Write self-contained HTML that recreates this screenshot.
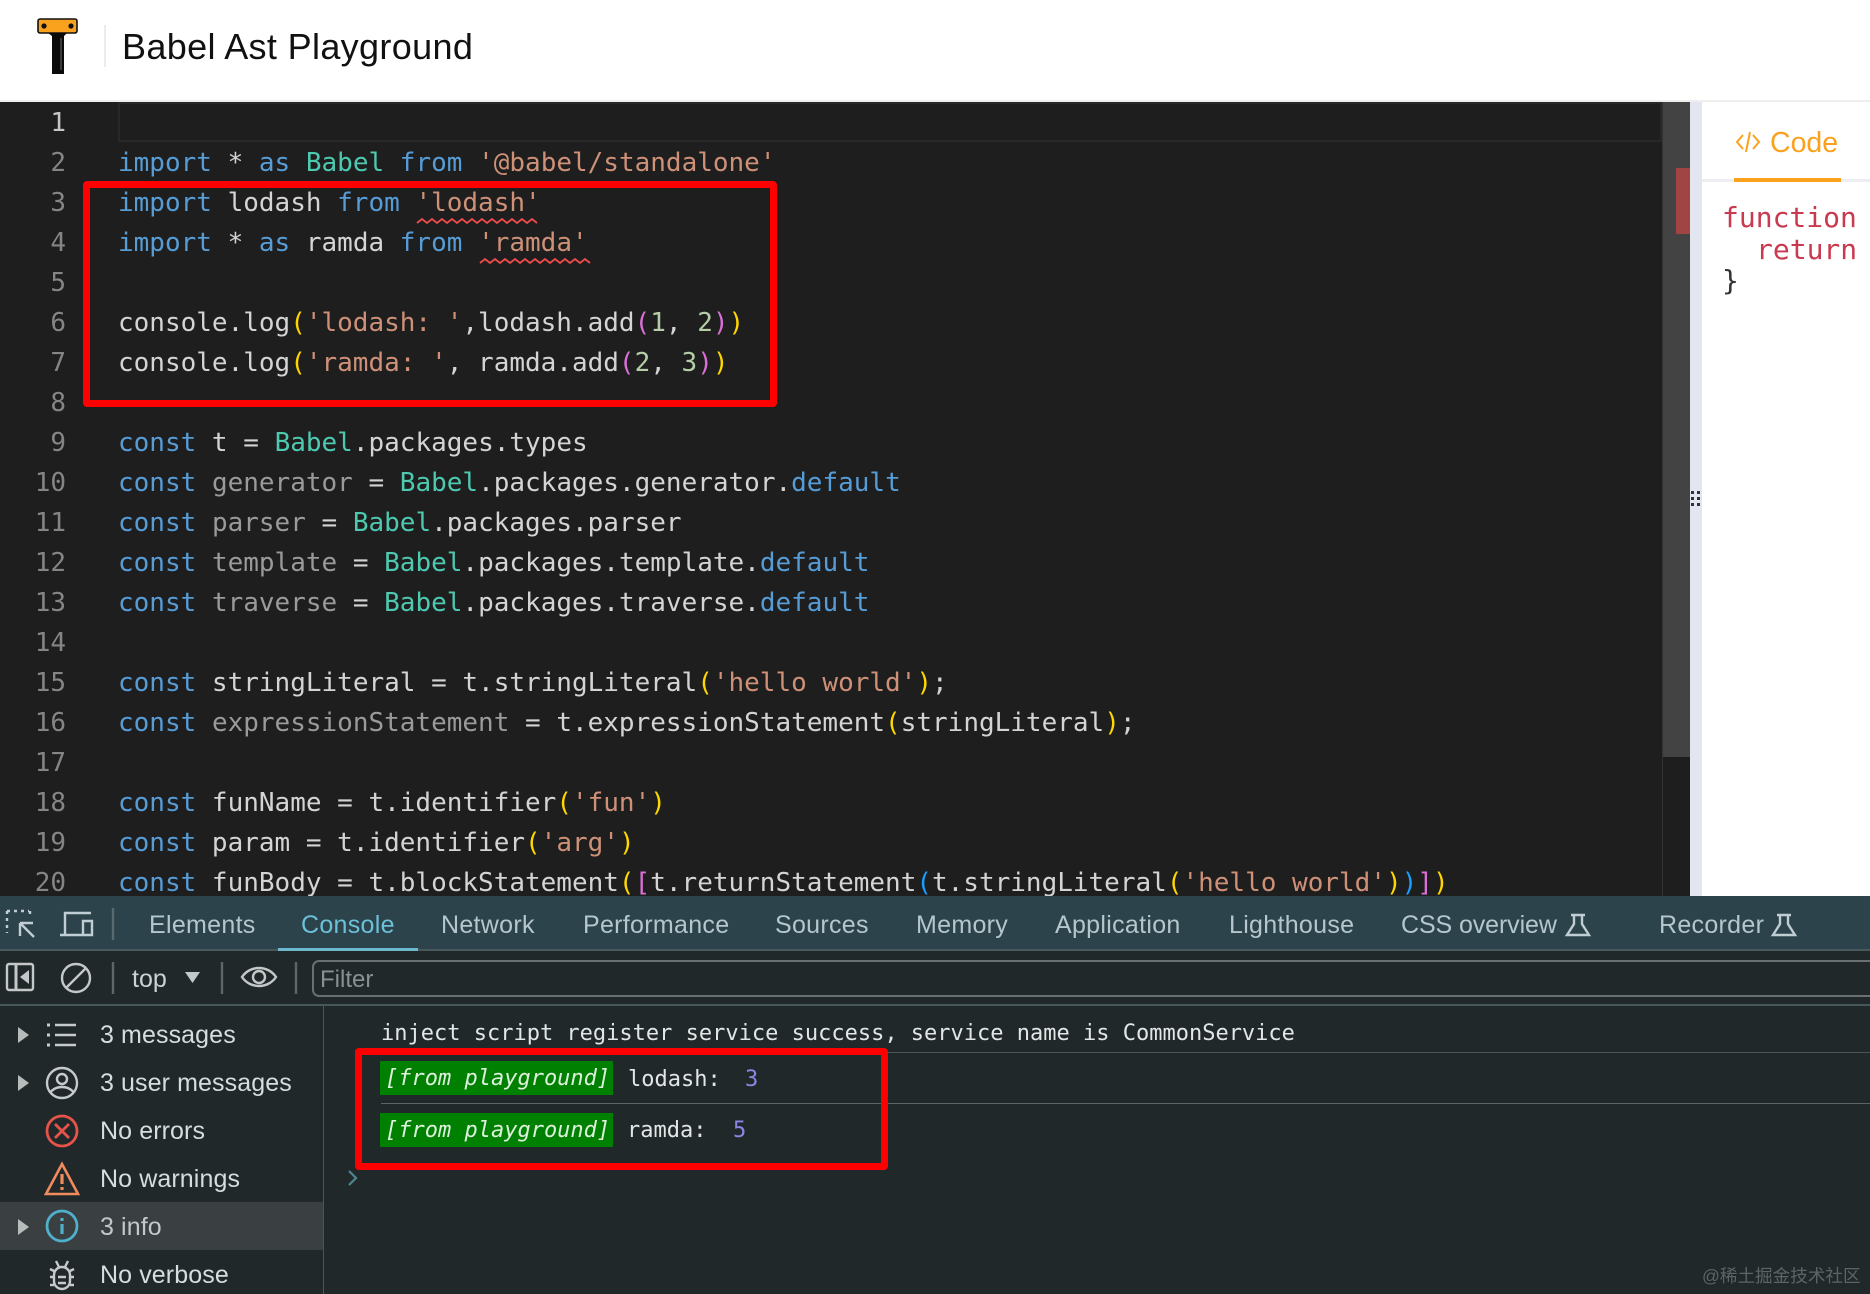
<!DOCTYPE html>
<html lang="en">
<head>
<meta charset="utf-8">
<title>Babel Ast Playground</title>
<style>
html,body{margin:0;padding:0;width:1870px;height:1294px;overflow:hidden;background:#fff}
*{box-sizing:border-box}
.abs,.l,.n,.tab,.side,.msg{position:absolute;white-space:pre}
#title{left:122px;top:25px;font:36px/44px "Liberation Sans",sans-serif;color:#111;letter-spacing:.35px}
#ed{position:absolute;left:0;top:102px;width:1662px;height:794px;background:#1e1e1e;overflow:hidden}
.l{left:118px;margin-top:1px;font:26px/40px "DejaVu Sans Mono",monospace;color:#d4d4d4}
.n{left:0;width:66px;margin-top:1px;text-align:right;font:26px/40px "DejaVu Sans Mono",monospace;color:#858585}
.k{color:#569cd6}.s{color:#ce9178}.t{color:#4ec9b0}.u{color:#9a9a9a}.d{color:#b5cea8}
.y{color:#ffd700}.p{color:#da70d6}.b{color:#179fff}
#dev{position:absolute;left:0;top:896px;width:1870px;height:398px;background:#212829;overflow:hidden}
#bar{position:absolute;left:0;top:0;width:1870px;height:55px;background:#2c434c;border-bottom:2px solid #48585c}
.tab{top:14px;font:25px/30px "Liberation Sans",sans-serif;color:#b5c6cc;letter-spacing:.3px}
.side{left:100px;font:25px/30px "Liberation Sans",sans-serif;color:#d6dddd;letter-spacing:.1px}
.msg{font:22px/30px "DejaVu Sans Mono",monospace;color:#e2e6e6}
.bd{left:380px;width:233px;height:34px;background:#008000;color:#dcf0dc;font:italic 22px/35px "DejaVu Sans Mono",monospace;padding-left:5px;position:absolute;white-space:pre}
.red{position:absolute;border:7px solid #ff0000;border-radius:4px}
</style>
</head>
<body>
<svg class="abs" style="left:36px;top:17px" width="44" height="58" viewBox="0 0 44 58">
<rect x="2" y="2" width="39" height="14" rx="2" fill="#faa11e" stroke="#111" stroke-width="1.6"/>
<circle cx="8" cy="9" r="2.6" fill="#111"/><circle cx="35" cy="9" r="2.6" fill="#111"/>
<path d="M12 16H31L28 19V57H16V19Z" fill="#0b0b0b"/>
<rect x="24" y="21" width="2" height="32" fill="#3a3a3a"/>
</svg>
<div class="abs" style="left:104px;top:25px;width:2px;height:42px;background:#ececec"></div>
<div id="title" class="abs">Babel Ast Playground</div>
<div class="abs" style="left:0;top:100px;width:1870px;height:2px;background:#eeeeee"></div>

<div id="ed">
<div class="abs" style="left:118px;top:0;width:1544px;height:40px;border:2px solid #282828"></div>
<div class="n" style="top:0;color:#c6c6c6">1</div>
<div class="n" style="top:40px">2</div><div class="n" style="top:80px">3</div><div class="n" style="top:120px">4</div><div class="n" style="top:160px">5</div><div class="n" style="top:200px">6</div><div class="n" style="top:240px">7</div><div class="n" style="top:280px">8</div><div class="n" style="top:320px">9</div><div class="n" style="top:360px">10</div><div class="n" style="top:400px">11</div><div class="n" style="top:440px">12</div><div class="n" style="top:480px">13</div><div class="n" style="top:520px">14</div><div class="n" style="top:560px">15</div><div class="n" style="top:600px">16</div><div class="n" style="top:640px">17</div><div class="n" style="top:680px">18</div><div class="n" style="top:720px">19</div><div class="n" style="top:760px">20</div>
<div class="l" style="top:40px"><span class="k">import</span> * <span class="k">as</span> <span class="t">Babel</span> <span class="k">from</span> <span class="s">'@babel/standalone'</span></div>
<div class="l" style="top:80px"><span class="k">import</span> lodash <span class="k">from</span> <span class="s">'lodash'</span></div>
<div class="l" style="top:120px"><span class="k">import</span> * <span class="k">as</span> ramda <span class="k">from</span> <span class="s">'ramda'</span></div>
<div class="l" style="top:200px">console.log<span class="y">(</span><span class="s">'lodash: '</span>,lodash.add<span class="p">(</span><span class="d">1</span>, <span class="d">2</span><span class="p">)</span><span class="y">)</span></div>
<div class="l" style="top:240px">console.log<span class="y">(</span><span class="s">'ramda: '</span>, ramda.add<span class="p">(</span><span class="d">2</span>, <span class="d">3</span><span class="p">)</span><span class="y">)</span></div>
<div class="l" style="top:320px"><span class="k">const</span> t = <span class="t">Babel</span>.packages.types</div>
<div class="l" style="top:360px"><span class="k">const</span> <span class="u">generator</span> = <span class="t">Babel</span>.packages.generator.<span class="k">default</span></div>
<div class="l" style="top:400px"><span class="k">const</span> <span class="u">parser</span> = <span class="t">Babel</span>.packages.parser</div>
<div class="l" style="top:440px"><span class="k">const</span> <span class="u">template</span> = <span class="t">Babel</span>.packages.template.<span class="k">default</span></div>
<div class="l" style="top:480px"><span class="k">const</span> <span class="u">traverse</span> = <span class="t">Babel</span>.packages.traverse.<span class="k">default</span></div>
<div class="l" style="top:560px"><span class="k">const</span> stringLiteral = t.stringLiteral<span class="y">(</span><span class="s">'hello world'</span><span class="y">)</span>;</div>
<div class="l" style="top:600px"><span class="k">const</span> <span class="u">expressionStatement</span> = t.expressionStatement<span class="y">(</span>stringLiteral<span class="y">)</span>;</div>
<div class="l" style="top:680px"><span class="k">const</span> funName = t.identifier<span class="y">(</span><span class="s">'fun'</span><span class="y">)</span></div>
<div class="l" style="top:720px"><span class="k">const</span> param = t.identifier<span class="y">(</span><span class="s">'arg'</span><span class="y">)</span></div>
<div class="l" style="top:760px"><span class="k">const</span> funBody = t.blockStatement<span class="y">(</span><span class="p">[</span>t.returnStatement<span class="b">(</span>t.stringLiteral<span class="y">(</span><span class="s">'hello world'</span><span class="y">)</span><span class="b">)</span><span class="p">]</span><span class="y">)</span></div>
</div>

<svg class="abs" style="left:0;top:0" width="1662" height="300" viewBox="0 0 1662 300">
<path d="M417 223l5-4 5 4 5-4 5 4 5-4 5 4 5-4 5 4 5-4 5 4 5-4 5 4 5-4 5 4 5-4 5 4 5-4 5 4 5-4 5 4 5-4 5 4 5-4 5 4" fill="none" stroke="#f14c4c" stroke-width="1.8"/>
<path d="M480 263l5-4 5 4 5-4 5 4 5-4 5 4 5-4 5 4 5-4 5 4 5-4 5 4 5-4 5 4 5-4 5 4 5-4 5 4 5-4 5 4 5-4 5 4" fill="none" stroke="#f14c4c" stroke-width="1.8"/>
</svg>

<div class="abs" style="left:1662px;top:102px;width:28px;height:655px;background:#434343"></div>
<div class="abs" style="left:1662px;top:757px;width:28px;height:139px;background:#1e1e1e"></div>
<div class="abs" style="left:1662px;top:102px;width:1px;height:794px;background:#333"></div>
<div class="abs" style="left:1676px;top:168px;width:14px;height:66px;background:#a04444"></div>
<div class="abs" style="left:1690px;top:102px;width:12px;height:794px;background:#e3e6ee"></div>
<svg class="abs" style="left:1690px;top:490px" width="12" height="18" viewBox="0 0 12 18" fill="#333">
<rect x="1" y="1" width="3" height="3"/><rect x="7" y="1" width="3" height="3"/><rect x="1" y="7" width="3" height="3"/><rect x="7" y="7" width="3" height="3"/><rect x="1" y="13" width="3" height="3"/><rect x="7" y="13" width="3" height="3"/>
</svg>
<svg class="abs" style="left:1735px;top:130px" width="26" height="24" viewBox="0 0 26 24" fill="none" stroke="#faa11e" stroke-width="2">
<path d="M8 5L2 12L8 19M18 5L24 12L18 19M15 2L11 22"/>
</svg>
<div class="abs" style="left:1770px;top:126px;font:28.5px/34px 'Liberation Sans',sans-serif;color:#faa11e">Code</div>
<div class="abs" style="left:1702px;top:179px;width:168px;height:3px;background:#eceef2"></div>
<div class="abs" style="left:1734px;top:178px;width:107px;height:4px;background:#faa11e"></div>
<div class="abs" style="left:1722px;top:202px;font:28px/32px 'DejaVu Sans Mono',monospace;color:#c93a50">function</div>
<div class="abs" style="left:1756px;top:234px;font:28px/32px 'DejaVu Sans Mono',monospace;color:#c93a50">return</div>
<div class="abs" style="left:1722px;top:265px;font:28px/32px 'DejaVu Sans Mono',monospace;color:#333">}</div>

<div id="dev">
<div id="bar"></div>
<div class="tab" style="left:149px">Elements</div>
<div class="tab" style="left:301px;color:#6cc0d8">Console</div>
<div class="tab" style="left:441px">Network</div>
<div class="tab" style="left:583px">Performance</div>
<div class="tab" style="left:775px">Sources</div>
<div class="tab" style="left:916px">Memory</div>
<div class="tab" style="left:1055px">Application</div>
<div class="tab" style="left:1229px">Lighthouse</div>
<div class="tab" style="left:1401px;letter-spacing:-.1px">CSS overview</div>
<div class="tab" style="left:1659px">Recorder</div>
<div class="abs" style="left:278px;top:52px;width:140px;height:3px;background:#6cb8cf"></div>
<svg class="abs" style="left:0;top:0" width="1870" height="110" viewBox="0 0 1870 110" fill="none" stroke="#c0cdd2" stroke-width="2.4">
<path d="M7 15h22M7 15v22M7 38v0M30 15v6" stroke-dasharray="3 4"/>
<path d="M20 27h13M20 27v13M20 27l14 14"/>
<path d="M65 39V17h26M60 39h22M83 25h9v14h-9z"/>
<path d="M113 12v32" stroke="#5a6b70"/>
<path d="M1571 19h14M1574 19v9l-7 11h22l-7-11v-9"/>
<path d="M1777 19h14M1780 19v9l-7 11h22l-7-11v-9"/>
</svg>
<div class="abs" style="left:0;top:108px;width:1870px;height:2px;background:#47585a"></div>
<svg class="abs" style="left:0;top:55px" width="330" height="52" viewBox="0 0 330 52" fill="none" stroke="#c4c8c8" stroke-width="2.4">
<rect x="7" y="13" width="26" height="26" rx="2"/><path d="M16 13v26" stroke-width="3"/>
<path d="M29 19v14l-9-7z" fill="#c4c8c8" stroke="none"/>
<circle cx="76" cy="27" r="14"/><path d="M66 37L86 17"/>
<path d="M113 11v32M222 11v32M296 11v32" stroke="#5d6668"/>
<path d="M185 21h15l-7.500 11z" fill="#c4c8c8" stroke="none"/>
<path d="M242 26c8-12 26-12 34 0c-8 12-26 12-34 0z"/><circle cx="259" cy="26" r="6"/>
</svg>
<div class="abs" style="left:132px;top:68px;font:25px/30px 'Liberation Sans',sans-serif;color:#ccd2d2">top</div>
<div class="abs" style="left:312px;top:64px;width:1600px;height:37px;border:2px solid #6a7070;border-radius:7px;font:24px/35px 'Liberation Sans',sans-serif;color:#8a9090;padding-left:6px">Filter</div>

<div class="abs" style="left:0;top:306px;width:323px;height:48px;background:#3a3f41"></div>
<div class="abs" style="left:323px;top:110px;width:1px;height:288px;background:#4a5556"></div>
<div class="side" style="top:124px">3 messages</div>
<div class="side" style="top:172px">3 user messages</div>
<div class="side" style="top:220px">No errors</div>
<div class="side" style="top:268px">No warnings</div>
<div class="side" style="top:316px;color:#c2c9c9">3 info</div>
<div class="side" style="top:364px">No verbose</div>
<svg class="abs" style="left:0;top:110px" width="100" height="288" viewBox="0 0 100 288" fill="none">
<g fill="#b6bcbc"><path d="M18 21l11 8-11 8zM18 69l11 8-11 8zM18 213l11 8-11 8z"/></g>
<g stroke="#c6caca" stroke-width="2.4"><path d="M55 19h21M55 29h21M55 39h21"/><path d="M47 19h3M47 29h3M47 39h3" stroke-width="3"/>
<circle cx="62" cy="77" r="15"/><circle cx="62" cy="73" r="5"/><path d="M50 87c5-8 19-8 24 0"/></g>
<g stroke="#e5534b" stroke-width="2.8"><circle cx="62" cy="125" r="15"/><path d="M55 118l14 14M69 118l-14 14"/></g>
<g stroke="#ef8b5c" stroke-width="2.6"><path d="M62 158L78 188H46Z"/><path d="M62 168v10M62 181v3" stroke-width="3.2"/></g>
<g stroke="#4fb0cc" stroke-width="2.8"><circle cx="62" cy="220" r="15"/><path d="M62 218v10M62 212v3" stroke-width="3.2"/></g>
<g stroke="#c6caca" stroke-width="2.4"><rect x="54" y="261" width="16" height="22" rx="8"/><path d="M50 271h4M70 271h4M50 279h4M70 279h4M50 263l4 2M74 263l-4 2M56 255l3 6M68 255l-3 6M58 271h8M58 277h8"/></g>
</svg>

<div class="msg" style="left:381px;top:123px">inject script register service success, service name is CommonService</div>
<div class="abs" style="left:381px;top:156px;width:1489px;height:1px;background:#4a5557"></div>
<div class="abs" style="left:381px;top:207px;width:1489px;height:1px;background:#5a6567"></div>
<div class="bd" style="top:165px">[from playground]</div>
<div class="msg" style="left:628px;top:169px">lodash:</div>
<div class="msg" style="left:745px;top:169px;color:#8f85e6">3</div>
<div class="bd" style="top:217px">[from playground]</div>
<div class="msg" style="left:627px;top:220px">ramda:</div>
<div class="msg" style="left:733px;top:220px;color:#8f85e6">5</div>
<svg class="abs" style="left:346px;top:272px" width="14" height="20" viewBox="0 0 14 20" fill="none" stroke="#4f8590" stroke-width="2.2"><path d="M3 3l7 7-7 7"/></svg>
<div class="abs" style="left:1702px;top:370px;font:17.6px/20px 'Liberation Sans','Noto Sans CJK SC',sans-serif;color:#5c6466">@稀土掘金技术社区</div>
</div>

<div class="red" style="left:83px;top:181px;width:694px;height:226px"></div>
<div class="red" style="left:355px;top:1048px;width:533px;height:122px"></div>
</body>
</html>
